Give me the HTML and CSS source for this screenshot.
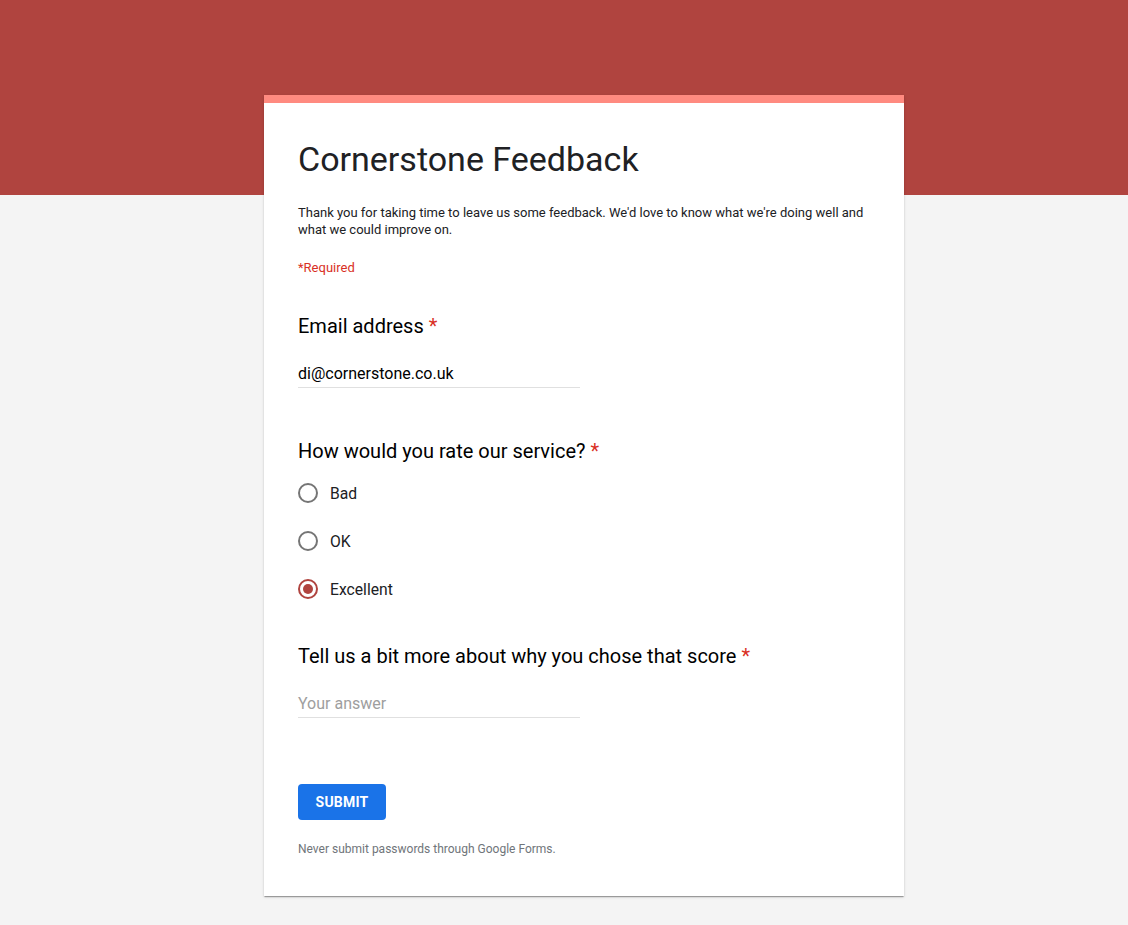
FILE: index.html
```html
<!DOCTYPE html>
<html>
<head>
<meta charset="utf-8">
<link rel="stylesheet" href="styles.css">
</head>
<body>
<div class="banner"></div>
<main class="page">
  <div class="card">
    <div class="stripe"></div>
    <div class="content">
      <h1 class="title">Cornerstone Feedback</h1>
      <p class="desc">Thank you for taking time to leave us some feedback. We'd love to know what we're doing well and what we could improve on.</p>
      <p class="required">*Required</p>

      <section class="q q-email">
        <div class="label">Email address <span class="star">*</span></div>
        <div class="input filled">di@cornerstone.co.uk</div>
      </section>

      <section class="q q-rate">
        <div class="label">How would you rate our service? <span class="star">*</span></div>
        <div class="options">
          <div class="opt"><span class="radio"></span><span>Bad</span></div>
          <div class="opt"><span class="radio"></span><span>OK</span></div>
          <div class="opt"><span class="radio checked"></span><span>Excellent</span></div>
        </div>
      </section>

      <section class="q q-why">
        <div class="label">Tell us a bit more about why you chose that score <span class="star">*</span></div>
        <div class="input placeholder">Your answer</div>
      </section>

      <button class="submit">SUBMIT</button>
      <p class="footnote">Never submit passwords through Google Forms.</p>
    </div>
  </div>
</main>
</body>
</html>
```
FILE: styles.css
```css
html, body {
  margin: 0;
  padding: 0;
}
body {
  background: #f4f4f4;
  font-family: Roboto, "Liberation Sans", Arial, sans-serif;
  color: #202124;
  min-height: 925px;
}
.banner {
  background: #b0443f;
  height: 195px;
}
.page {
  display: flex;
  justify-content: center;
  margin-top: -100px;
  padding-left: 40px;
  padding-bottom: 28px;
}
.card {
  width: 640px;
  background: #fff;
  box-shadow: 0 2px 1px -1px rgba(0,0,0,0.2), 0 1px 1px 0 rgba(0,0,0,0.14), 0 1px 3px 0 rgba(0,0,0,0.12);
}
.stripe {
  height: 8px;
  background: #ff8a80;
}
.content {
  padding: 36px 34px 39px 34px;
  display: flex;
  flex-direction: column;
  align-items: flex-start;
}
.title {
  margin: 0;
  font-size: 34px;
  line-height: 40px;
  font-weight: 400;
  color: #202124;
}
.desc {
  margin: 25px 0 0;
  font-size: 13px;
  line-height: 17px;
  color: #202124;
  max-width: 572px;
}
.required {
  margin: 21px 0 0;
  font-size: 13px;
  line-height: 17px;
  color: #d93025;
}
.q {
  display: flex;
  flex-direction: column;
  align-items: flex-start;
}
.q-email { margin-top: 38px; }
.q-rate { margin-top: 51px; }
.q-why { margin-top: 31px; }
.label {
  font-size: 20px;
  line-height: 24px;
  color: #000;
}
.star {
  color: #d93025;
}
.input {
  width: 282px;
  margin-top: 24px;
  font-size: 16px;
  line-height: 24px;
  padding-bottom: 1px;
  border-bottom: 1px solid #e0e0e0;
}
.input.filled { color: #000; }
.input.placeholder { color: #9e9e9e; }
.options {
  margin-top: 6px;
  display: flex;
  flex-direction: column;
}
.opt {
  height: 48px;
  display: flex;
  align-items: center;
  gap: 12px;
  font-size: 15.7px;
  color: #202124;
}
.radio {
  box-sizing: border-box;
  width: 20px;
  height: 20px;
  border: 2px solid #757575;
  border-radius: 50%;
  display: flex;
  align-items: center;
  justify-content: center;
}
.radio.checked {
  border-color: #b0443f;
}
.radio.checked::after {
  content: "";
  width: 10px;
  height: 10px;
  border-radius: 50%;
  background: #b0443f;
}
.submit {
  margin-top: 66px;
  width: 88px;
  height: 36px;
  border: none;
  border-radius: 4px;
  background: #1a73e8;
  color: #fff;
  font-family: Roboto, "Liberation Sans", Arial, sans-serif;
  font-size: 14px;
  font-weight: 700;
  letter-spacing: 0.2px;
  padding: 0;
}
.footnote {
  margin: 21px 0 0;
  font-size: 12px;
  line-height: 16px;
  color: #70757a;
}
```
